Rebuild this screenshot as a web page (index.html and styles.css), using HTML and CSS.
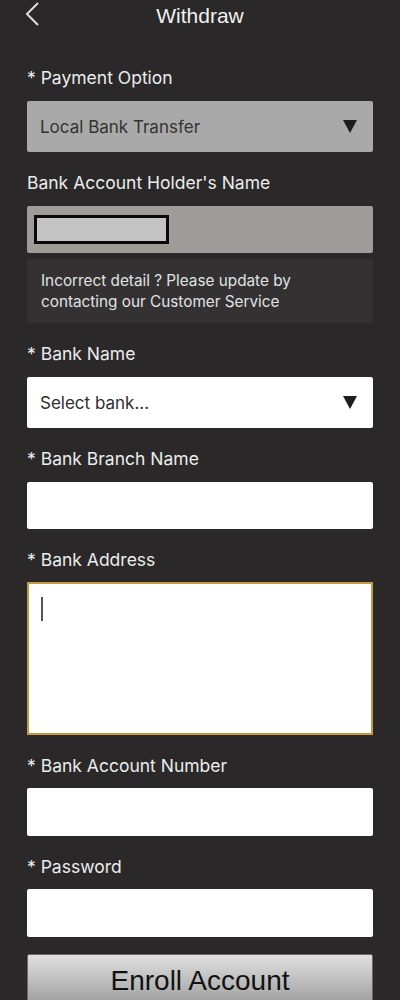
FILE: index.html
```html
<!DOCTYPE html>
<html>
<head>
<meta charset="utf-8">
<link rel="stylesheet" href="styles.css">
</head>
<body>
<header class="topbar">
  <div class="back">
    <svg width="16" height="26" viewBox="0 0 16 26"><polyline points="12,2 1,13 12,24" fill="none" stroke="#dcdcdc" stroke-width="2"/></svg>
  </div>
  <div class="title">Withdraw</div>
  <div></div>
</header>
<main class="form">
  <div class="field">
    <div class="label">* Payment Option</div>
    <div class="select select-disabled"><span>Local Bank Transfer</span><i class="tri"></i></div>
  </div>
  <div class="field">
    <div class="label">Bank Account Holder's Name</div>
    <div class="readonly"><div class="redact"></div></div>
    <div class="note">Incorrect detail ? Please update by contacting our Customer Service</div>
  </div>
  <div class="field">
    <div class="label">* Bank Name</div>
    <div class="select"><span>Select bank...</span><i class="tri"></i></div>
  </div>
  <div class="field">
    <div class="label">* Bank Branch Name</div>
    <div class="input"></div>
  </div>
  <div class="field">
    <div class="label">* Bank Address</div>
    <div class="textarea"><span class="caret"></span></div>
  </div>
  <div class="field tight">
    <div class="label">* Bank Account Number</div>
    <div class="input"></div>
  </div>
  <div class="field tight">
    <div class="label">* Password</div>
    <div class="input"></div>
  </div>
  <button class="enroll">Enroll Account</button>
</main>
</body>
</html>
```
FILE: styles.css
```css
html, body {
  margin: 0;
  padding: 0;
  background: #2a2829;
}
body {
  font-family: Inter, "Liberation Sans", sans-serif;
  color: #e8e8e8;
  width: 400px;
}
.topbar {
  display: grid;
  grid-template-columns: 1fr auto 1fr;
  align-items: center;
  height: 34px;
}
.back {
  padding-left: 26px;
  display: flex;
  align-items: center;
  height: 34px;
  margin-top: -6px;
}
.title {
  font-family: "Liberation Sans", Arial, sans-serif;
  font-size: 21px;
  color: #f0f0f0;
  margin-top: -2px;
}
.form {
  padding: 34px 27px 0 27px;
}
.field {
  margin-bottom: 21px;
}
.label {
  font-size: 17.5px;
  line-height: 20px;
  color: #ececec;
  margin-bottom: 13px;
}
.tight .label {
  margin-bottom: 12px;
}
.select {
  height: 51px;
  border-radius: 2px;
  background: #ffffff;
  display: flex;
  align-items: center;
  justify-content: space-between;
  padding: 0 16px 0 13px;
  font-size: 17px;
  color: #2e2e2e;
  box-sizing: border-box;
}
.select-disabled {
  background: #a9a9a9;
  color: #333;
}
.tri {
  width: 0;
  height: 0;
  border-left: 7.5px solid transparent;
  border-right: 7.5px solid transparent;
  border-top: 13px solid #1e1e1e;
}
.readonly {
  height: 47px;
  background: #9e9c98;
  border-radius: 2px;
  padding: 9px 0 0 7px;
  box-sizing: border-box;
}
.redact {
  width: 135px;
  height: 29px;
  background: #c4c4c4;
  border: 3px solid #0a0a0a;
  box-sizing: border-box;
}
.note {
  margin-top: 6px;
  background: #333132;
  height: 64px;
  box-sizing: border-box;
  padding: 11px 14px 0 14px;
  font-size: 15.3px;
  line-height: 21px;
  color: #e2e2e2;
}
.input {
  height: 48px;
  background: #fff;
  border-radius: 2px;
}
.field:nth-child(4) .input {
  height: 47px;
}
.textarea {
  height: 153px;
  margin-top: -1px;
  background: #fff;
  border: 2px solid #c39a3f;
  box-sizing: border-box;
  padding: 13px 0 0 12px;
}
.caret {
  display: block;
  width: 1.5px;
  height: 24px;
  background: #555;
}
.enroll {
  display: block;
  width: 346px;
  height: 52px;
  margin-top: -4px;
  border: 1px solid #6a6a6a;
  border-radius: 2px;
  background: linear-gradient(#e0e0e0, #b8b8b8 60%, #9c9c9c);
  font-family: "Liberation Sans", Arial, sans-serif;
  font-size: 28px;
  color: #111;
  padding: 0;
  padding-top: 2px;
}
```
